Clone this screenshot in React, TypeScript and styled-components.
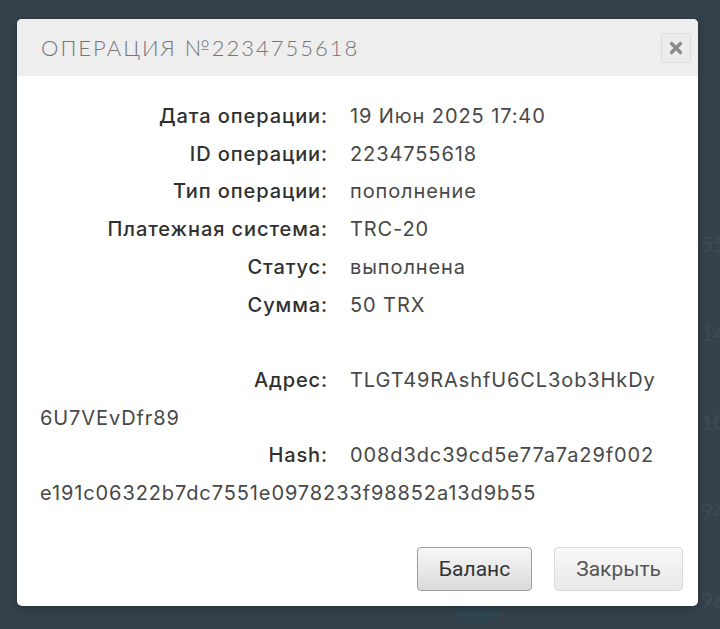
import React from "react";
import styled, { createGlobalStyle } from "styled-components";

const GlobalStyle = createGlobalStyle`
  html, body {
    margin: 0;
    padding: 0;
    background: #36424b;
    overflow: hidden;
  }
`;

const Page = styled.div`
  position: relative;
  width: 720px;
  height: 629px;
  background: #36424b;
  overflow: hidden;
`;

const BackColumn = styled.div`
  display: flex;
  flex-direction: column;
  align-items: flex-end;
  gap: 62px;
  padding: 230px 0 0 0;
  font: 22px "Lato", sans-serif;
  color: #3f4b54;
  margin-right: -6px;
`;

const BackCircle = styled.div`
  position: absolute;
  left: 453px;
  top: 575px;
  width: 50px;
  height: 50px;
  border-radius: 50%;
  background: #2e4551;
`;

const Modal = styled.div`
  position: absolute;
  left: 17px;
  top: 19px;
  width: 681px;
  background: #fff;
  border-radius: 5px;
  overflow: hidden;
  box-shadow: 0 2px 10px rgba(0, 0, 0, 0.3);
`;

const Header = styled.div`
  height: 57px;
  display: flex;
  align-items: center;
  justify-content: space-between;
  padding: 0 7px 0 24px;
  background: #eeeeee;
`;

const Title = styled.h2`
  margin: 0;
  font: 300 22px "Lato", sans-serif;
  letter-spacing: 2px;
  color: #767676;
  text-transform: uppercase;
`;

const CloseIcon = styled.button`
  width: 30px;
  height: 30px;
  padding: 0;
  display: flex;
  align-items: center;
  justify-content: center;
  border: 1px solid #dcdcdc;
  border-radius: 4px;
  background: #ececec;
`;

const Body = styled.div`
  padding: 22px 23px 0 23px;
  font: 20px "Inter", sans-serif;
  letter-spacing: 0.9px;
  line-height: 37.7px;
  color: #484848;
`;

const Line = styled.div`
  min-height: 37.7px;
`;

const Label = styled.span`
  display: inline-block;
  width: 288px;
  margin-right: 22px;
  text-align: right;
  color: #303030;
  font-weight: 500;
`;

const Footer = styled.div`
  display: flex;
  justify-content: flex-end;
  gap: 22px;
  padding: 34px 15px 15px;
`;

const Button = styled.button<{ $primary?: boolean }>`
  height: 44px;
  padding: 0 21px;
  font: 21px "Roboto", sans-serif;
  border-radius: 4px;
  border: 1px solid ${(p) => (p.$primary ? "#9c9c9c" : "#dadada")};
  color: ${(p) => (p.$primary ? "#333" : "#555")};
  background: ${(p) =>
    p.$primary
      ? "linear-gradient(#f7f7f7, #e9e9e9 50%, #dadada)"
      : "linear-gradient(#f8f8f8, #f0f0f0 50%, #e9e9e9)"};
`;

const rows: [string, string][] = [
  ["Дата операции:", "19 Июн 2025 17:40"],
  ["ID операции:", "2234755618"],
  ["Тип операции:", "пополнение"],
  ["Платежная система:", "TRC-20"],
  ["Статус:", "выполнена"],
  ["Сумма:", "50 TRX"],
];

export default function App() {
  return (
    <Page>
      <GlobalStyle />
      <BackColumn>
        <span>55</span>
        <span>14</span>
        <span>10</span>
        <span>94</span>
        <span>96</span>
      </BackColumn>
      <BackCircle />
      <Modal>
        <Header>
          <Title>Операция №2234755618</Title>
          <CloseIcon aria-label="close">
            <svg width="14" height="14" viewBox="0 0 14 14">
              <path d="M2.5 2.5 L11.5 11.5 M11.5 2.5 L2.5 11.5" stroke="#8a8a8a" strokeWidth="3.4" strokeLinecap="round" />
            </svg>
          </CloseIcon>
        </Header>
        <Body>
          {rows.map(([k, v]) => (
            <Line key={k}>
              <Label>{k}</Label>
              {v}
            </Line>
          ))}
          <Line />
          <Line>
            <Label>Адрес:</Label>
            TLGT49RAshfU6CL3ob3HkDy
            <br />
            6U7VEvDfr89
          </Line>
          <Line>
            <Label>Hash:</Label>
            008d3dc39cd5e77a7a29f002
            <br />
            e191c06322b7dc7551e0978233f98852a13d9b55
          </Line>
        </Body>
        <Footer>
          <Button $primary>Баланс</Button>
          <Button>Закрыть</Button>
        </Footer>
      </Modal>
    </Page>
  );
}
